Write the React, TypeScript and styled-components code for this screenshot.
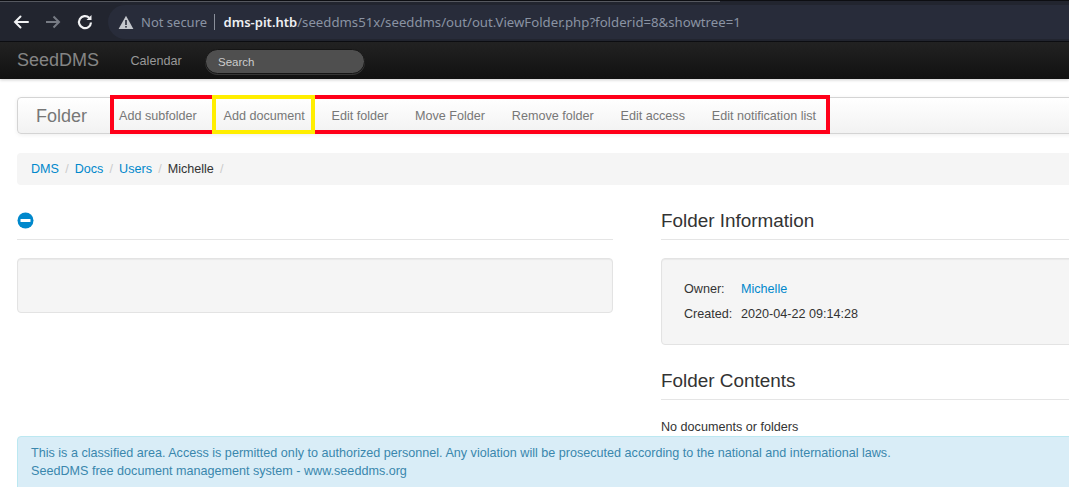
import React from "react";
import styled, { createGlobalStyle } from "styled-components";

const Global = createGlobalStyle`
  html, body { margin: 0; padding: 0; height: 100%; overflow: hidden; background: #fff; }
  body { font-family: "Liberation Sans", Arial, sans-serif; font-size: 12.6px; color: #333; }
  #root { width: 1069px; height: 487px; overflow: hidden; position: relative; }
`;

const Page = styled.div`
  width: 1069px;
  height: 487px;
  overflow: hidden;
  position: relative;
  display: flex;
  flex-direction: column;
`;

const TabEdge = styled.div`
  height: 5px;
  flex: none;
  background: #22252f;
  border-top: 1px solid #0d0e12;
  box-sizing: border-box;
  display: flex;
`;
const TabLine = styled.div`
  width: 720px;
  height: 1px;
  background: #55585f;
`;

const BrowserBar = styled.div`
  height: 37px;
  box-sizing: border-box;
  flex: none;
  background: #22252f;
  display: flex;
  align-items: center;
  padding: 0 0 2px 12px;
  border-bottom: 1px solid #0d0e12;
`;
const NavIcon = styled.svg`
  width: 18px;
  height: 18px;
  flex: none;
  margin-right: 14px;
  fill: none;
  stroke: ${(p) => p.color || "#f1f2f4"};
  stroke-width: 2;
`;
const UrlPill = styled.div`
  height: 34px;
  flex: 1;
  background: #282c3a;
  border-radius: 17px 0 0 17px;
  display: flex;
  align-items: center;
  padding-left: 10px;
  font-family: "Noto Sans", sans-serif;
  font-size: 13px;
  white-space: nowrap;
`;
const NotSecure = styled.span`
  color: #8a93a3;
  margin-left: 7px;
  padding-right: 7px;
  border-right: 1px solid #8a8f9a;
  line-height: 16px;
`;
const Host = styled.span`
  color: #eef0f3;
  margin-left: 8.5px;
  font-weight: 600;
`;
const UrlRest = styled.span`
  color: #8a93a3;
  font-size: 13.2px;
`;

const AppBar = styled.div`
  height: 37px;
  flex: none;
  background: linear-gradient(#222222, #111111);
  display: flex;
  align-items: center;
  padding-left: 17px;
  box-shadow: 0 1px 3px rgba(0, 0, 0, 0.2);
`;
const AppBrand = styled.div`
  font-size: 18px;
  color: #858585;
  width: 113.5px;
`;
const AppLink = styled.div`
  font-size: 12.6px;
  color: #999;
  width: 74.5px;
`;
const SearchBox = styled.div`
  width: 160px;
  height: 25px;
  margin-top: 1px;
  box-sizing: border-box;
  border-radius: 14px;
  background: #4f4f4f;
  border: 1px solid #151515;
  box-shadow: 0 1px 0 rgba(255, 255, 255, 0.15);
  color: #ccc;
  font-size: 11.5px;
  line-height: 24px;
  padding-left: 12px;
`;

const Content = styled.div`
  flex: 1;
  width: 1300px;
  padding: 18px 0 0 17px;
  position: relative;
  box-sizing: border-box;
`;

const MenuBar = styled.div`
  height: 37px;
  box-sizing: border-box;
  display: flex;
  align-items: center;
  position: relative;
  background: linear-gradient(#ffffff, #f2f2f2);
  border: 1px solid #d4d4d4;
  border-radius: 4px;
  box-shadow: 0 1px 4px rgba(0, 0, 0, 0.065);
  padding-left: 18px;
`;
const MenuBrand = styled.div`
  font-size: 18px;
  color: #777;
  width: 83px;
  flex: none;
  padding-top: 1px;
`;
const MenuLink = styled.div`
  font-size: 12.6px;
  color: #777;
  margin-right: 26.8px;
  white-space: nowrap;
`;
const Mark = styled.div<{ $left: number; $width: number; $color: string }>`
  position: absolute;
  top: -3px;
  height: 39px;
  box-sizing: border-box;
  left: ${(p) => p.$left}px;
  width: ${(p) => p.$width}px;
  border: 4px solid ${(p) => p.$color};
`;

const Breadcrumbs = styled.div`
  margin-top: 19px;
  height: 32px;
  box-sizing: border-box;
  padding: 0 0 1px 14px;
  background: #f5f5f5;
  border-radius: 4px;
  display: flex;
  align-items: center;
`;
const Crumb = styled.span`
  color: #0088cc;
`;
const CrumbActive = styled.span`
  color: #333;
`;
const Sep = styled.span`
  color: #ccc;
  margin: 0 6px 0 6.2px;
`;

const Columns = styled.div`
  display: grid;
  grid-template-columns: 596px 596px;
  column-gap: 48px;
  margin-top: 18px;
`;
const Column = styled.div`
  display: flex;
  flex-direction: column;
`;
const HeadRow = styled.div`
  height: 37px;
  box-sizing: border-box;
  border-bottom: 1px solid #e5e5e5;
  display: flex;
  align-items: center;
`;
const HeadRowIcon = styled(HeadRow)`
  padding-bottom: 2px;
`;
const Title = styled.div`
  font-size: 18.9px;
  color: #333;
`;
const Well = styled.div<{ $h: number }>`
  height: ${(p) => p.$h}px;
  box-sizing: border-box;
  margin-top: 18px;
  background: #f5f5f5;
  border: 1px solid #e3e3e3;
  border-radius: 4px;
  box-shadow: inset 0 1px 1px rgba(0, 0, 0, 0.05);
`;
const InfoWell = styled(Well)`
  padding: 17px 22px;
  display: grid;
  grid-template-columns: 57px 1fr;
  grid-auto-rows: 25px;
  align-items: center;
`;
const SectionGap = styled.div`
  height: 18px;
`;
const Plain = styled.div`
  margin-top: 20px;
  color: #333;
`;

const Footer = styled.div`
  position: absolute;
  left: 17px;
  top: 436px;
  width: 1300px;
  height: 60px;
  box-sizing: border-box;
  background: #d9edf7;
  border: 1px solid #bce8f1;
  border-radius: 4px;
  color: #3a87ad;
  padding: 7px 13px;
  line-height: 18px;
`;

export default function App() {
  return (
    <Page>
      <Global />
      <TabEdge>
        <TabLine />
      </TabEdge>
      <BrowserBar>
        <NavIcon viewBox="0 0 18 18" strokeLinecap="round">
          <path d="M16 9H3M8.5 3.5 3 9l5.5 5.5" />
        </NavIcon>
        <NavIcon viewBox="0 0 18 18" color="#777b84">
          <path d="M2 9h13M9.5 3.5 15 9l-5.5 5.5" />
        </NavIcon>
        <NavIcon viewBox="0 0 18 18">
          <path d="M15 9.5A6 6 0 1 1 13.2 4.8" strokeWidth="2.2" />
          <path d="M15.5 2v5h-5z" fill="#f1f2f4" stroke="none" />
        </NavIcon>
        <UrlPill>
          <svg width="16" height="15" viewBox="0 0 16 15">
            <path d="M8 .8 15.4 14H.6z" fill="#c4c7cc" />
            <rect x="7.2" y="5" width="1.6" height="5" fill="#282c3a" />
            <rect x="7.2" y="11" width="1.6" height="1.6" fill="#282c3a" />
          </svg>
          <NotSecure>Not secure</NotSecure>
          <Host>dms-pit.htb</Host>
          <UrlRest>/seeddms51x/seeddms/out/out.ViewFolder.php?folderid=8&amp;showtree=1</UrlRest>
        </UrlPill>
      </BrowserBar>
      <AppBar>
        <AppBrand>SeedDMS</AppBrand>
        <AppLink>Calendar</AppLink>
        <SearchBox>Search</SearchBox>
      </AppBar>
      <Content>
        <MenuBar>
          <MenuBrand>Folder</MenuBrand>
          <MenuLink>Add subfolder</MenuLink>
          <MenuLink>Add document</MenuLink>
          <MenuLink>Edit folder</MenuLink>
          <MenuLink>Move Folder</MenuLink>
          <MenuLink>Remove folder</MenuLink>
          <MenuLink>Edit access</MenuLink>
          <MenuLink>Edit notification list</MenuLink>
          <Mark $left={92} $width={720} $color="#ff0019" />
          <Mark $left={194} $width={103} $color="#ffee00" />
        </MenuBar>
        <Breadcrumbs>
          <Crumb>DMS</Crumb>
          <Sep>/</Sep>
          <Crumb>Docs</Crumb>
          <Sep>/</Sep>
          <Crumb>Users</Crumb>
          <Sep>/</Sep>
          <CrumbActive>Michelle</CrumbActive>
          <Sep>/</Sep>
        </Breadcrumbs>
        <Columns>
          <Column>
            <HeadRowIcon>
              <svg width="17" height="17" viewBox="0 0 17 17">
                <circle cx="8.5" cy="8.5" r="8" fill="#0088cc" />
                <rect x="3.5" y="7" width="10" height="3" rx="0.5" fill="#fff" />
              </svg>
            </HeadRowIcon>
            <Well $h={55} />
          </Column>
          <Column>
            <HeadRow>
              <Title>Folder Information</Title>
            </HeadRow>
            <InfoWell $h={87}>
              <span>Owner:</span>
              <Crumb>Michelle</Crumb>
              <span>Created:</span>
              <span>2020-04-22 09:14:28</span>
            </InfoWell>
            <SectionGap />
            <HeadRow>
              <Title>Folder Contents</Title>
            </HeadRow>
            <Plain>No documents or folders</Plain>
          </Column>
        </Columns>
      </Content>
      <Footer>
        This is a classified area. Access is permitted only to authorized personnel. Any violation will be prosecuted according to the national and international laws.
        <br />
        SeedDMS free document management system - www.seeddms.org
      </Footer>
    </Page>
  );
}
